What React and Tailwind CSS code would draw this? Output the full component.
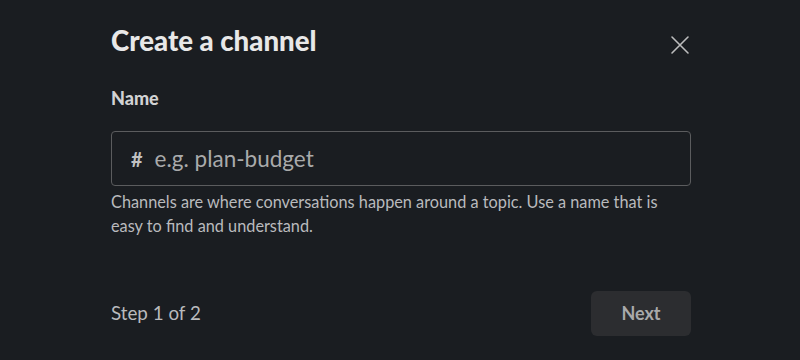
export default function App() {
  return (
    <div className="w-[800px] h-[360px] bg-[#1a1d21] text-[#d1d2d3] overflow-hidden" style={{ fontFamily: "Lato, 'Noto Sans', sans-serif" }}>
      <div className="ml-[111px] w-[580px] flex flex-col">
        <div className="flex items-center justify-between pt-[19px] h-[62px]">
          <h1 className="text-[27.6px] font-black leading-[36px] text-[#e8e8e8]">Create a channel</h1>
          <button className="w-[36px] h-[36px] flex items-center justify-center mr-[-7px] mt-[8px]">
            <svg width="20" height="20" viewBox="0 0 20 20" fill="none" stroke="#bdbdbe" strokeWidth="1.6" strokeLinecap="round">
              <path d="M2 2L18 18M18 2L2 18" />
            </svg>
          </button>
        </div>
        <div className="mt-[24px] text-[18px] font-black leading-[24px] text-[#d1d2d3]">Name</div>
        <div className="mt-[21px] h-[55px] rounded-[4px] border border-[#5b5c5e] flex items-center px-[19px] text-[22.5px] text-[#a9aaab]">
          <span className="mr-[12px] font-bold text-[#c0c1c2] text-[20px]">#</span>
          <span>e.g. plan-budget</span>
        </div>
        <p className="mt-[4px] text-[16.3px] leading-[24px] text-[#b9babd]">
          Channels are where conversations happen around a topic. Use a name that is<br />easy to find and understand.
        </p>
        <div className="mt-[53px] flex items-center justify-between">
          <span className="text-[18.8px] text-[#b9babd]">Step 1 of 2</span>
          <button className="w-[100px] h-[45px] rounded-[6px] bg-[#2c2d30] text-[18px] font-bold text-[#a9aaab]">Next</button>
        </div>
      </div>
    </div>
  );
}
